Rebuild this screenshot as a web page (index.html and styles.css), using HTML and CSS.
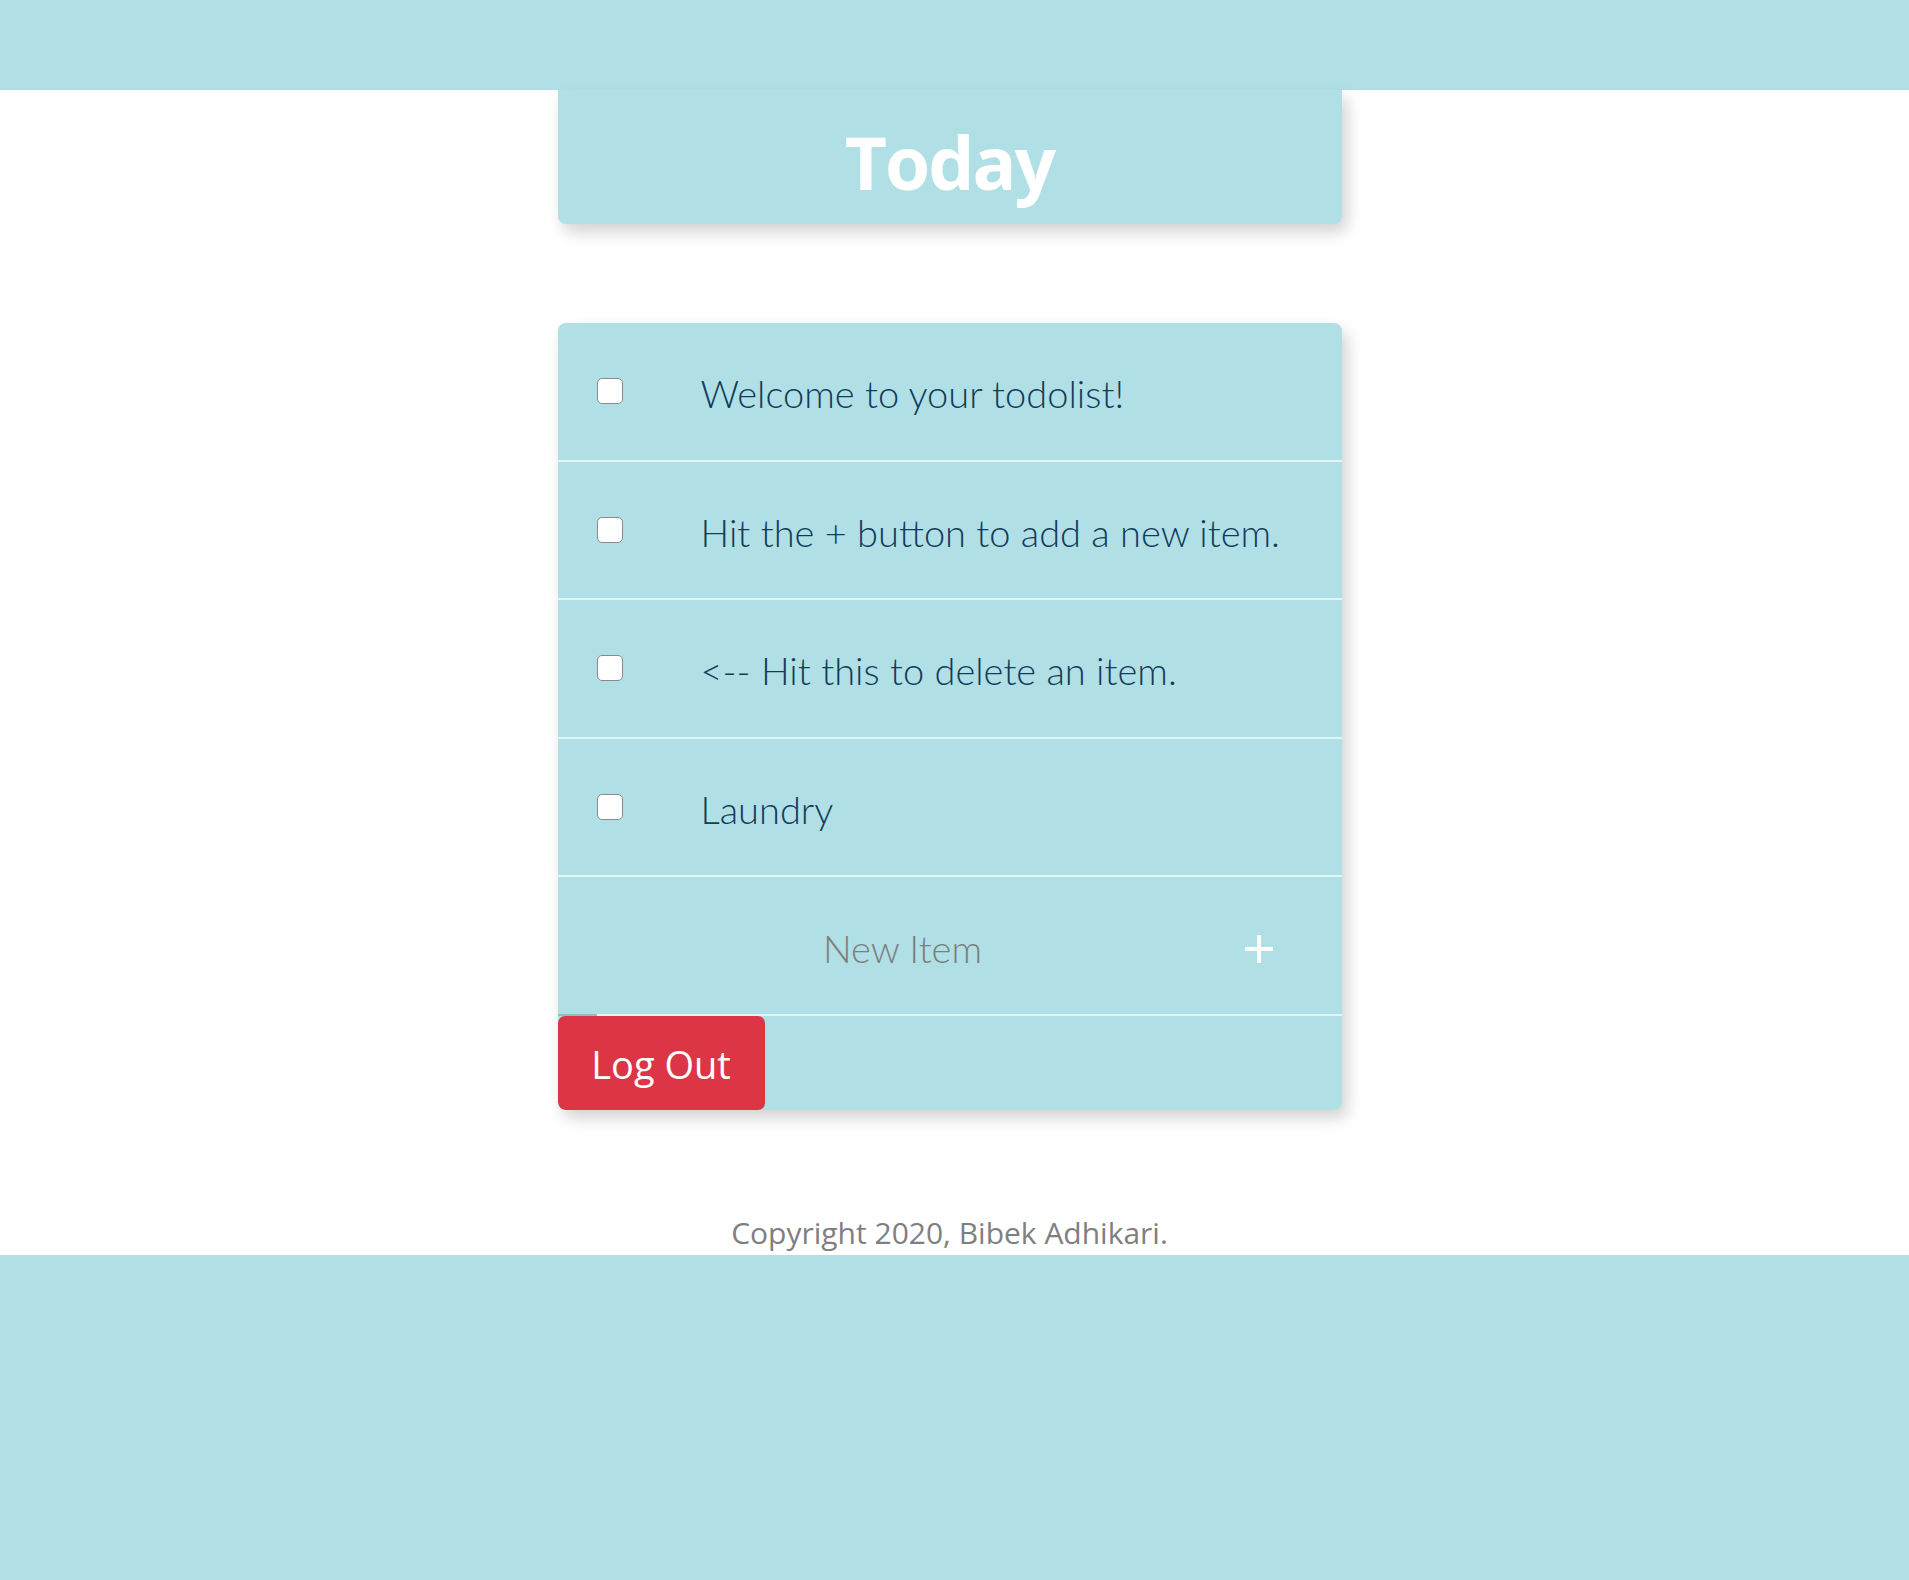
FILE: index.html
```html
<!DOCTYPE html>
<html lang="en">
<head>
<meta charset="utf-8">
<title>To-Do List</title>
<link rel="stylesheet" href="styles.css">
</head>
<body>
<div class="band band-top"></div>
<div class="wrap">
  <div class="heading box">
    <h1>Today</h1>
  </div>
  <div class="list box">
    <div class="item">
      <input type="checkbox" class="check">
      <p>Welcome to your todolist!</p>
    </div>
    <div class="item">
      <input type="checkbox" class="check">
      <p>Hit the + button to add a new item.</p>
    </div>
    <div class="item">
      <input type="checkbox" class="check">
      <p>&lt;-- Hit this to delete an item.</p>
    </div>
    <div class="item">
      <input type="checkbox" class="check">
      <p>Laundry</p>
    </div>
    <form class="item new-item">
      <input type="text" class="new-input" placeholder="New Item" autocomplete="off">
      <button type="button" class="add-btn" aria-label="Add">
        <svg width="28" height="28" viewBox="0 0 28 28"><path d="M14 0V28M0 14H28" stroke="#fff" stroke-width="4" fill="none"/></svg>
      </button>
    </form>
    <div class="logout-row">
      <button type="button" class="logout">Log Out</button>
    </div>
  </div>
  <footer class="footer">
    <p>Copyright 2020, Bibek Adhikari.</p>
  </footer>
</div>
<div class="band band-bottom"></div>
</body>
</html>
```

FILE: styles.css
```css
html, body {
  margin: 0;
  padding: 0;
  background: #ffffff;
}

body {
  font-family: "Open Sans", "Noto Sans", sans-serif;
}

.band {
  background: #b0e0e6;
}

.band-top {
  height: 90px;
}

.band-bottom {
  height: 326px;
}

.wrap {
  width: 784px;
  margin: 0 auto;
  position: relative;
  left: -5px;
}

.box {
  background: #b0e0e6;
  border-radius: 8px;
  box-shadow: 5px 8px 16px rgba(0, 0, 0, 0.18);
}

.heading {
  height: 134px;
  border-radius: 0 0 8px 8px;
  display: flex;
  align-items: center;
  justify-content: center;
}

.heading h1 {
  margin: 0;
  padding-top: 8px;
  color: #ffffff;
  font-family: "Open Sans", sans-serif;
  font-weight: 700;
  font-size: 73px;
  line-height: 1;
  letter-spacing: -2px;
}

.list {
  margin-top: 99px;
  overflow: hidden;
}

.item {
  height: 136.5px;
  border-bottom: 2px solid #e4f3f5;
  display: flex;
  align-items: center;
  padding-left: 39px;
  margin: 0;
}

.item p {
  margin: 0 0 0 78px;
  padding-top: 4px;
  font-family: "Lato", "Open Sans", sans-serif;
  font-weight: 300;
  font-size: 38px;
  color: #143c5a;
}

.check {
  appearance: none;
  -webkit-appearance: none;
  width: 26px;
  height: 26px;
  margin: 0;
  background: #ffffff;
  border: 1.5px solid #8a8a8a;
  border-radius: 5px;
  box-sizing: border-box;
  flex: none;
}

.new-item {
  padding-left: 39px;
  border-bottom: none;
  padding-bottom: 2px;
  background-image: linear-gradient(to right, #93bcc1 39px, #e4f3f5 39px);
  background-size: 100% 2px;
  background-position: left bottom;
  background-repeat: no-repeat;
}

.new-input {
  width: 612px;
  border: none;
  background: transparent;
  outline: none;
  text-align: center;
  font-family: "Lato", "Open Sans", sans-serif;
  font-weight: 300;
  font-size: 38px;
  color: #143c5a;
  padding: 0;
  margin: 5px 0 0 0;
}

.new-input::placeholder {
  color: #7b7f80;
}

.add-btn {
  width: 100px;
  height: 60px;
  border: none;
  background: transparent;
  padding: 0;
  margin-top: 7px;
  display: flex;
  align-items: center;
  justify-content: center;
}

.logout-row {
  height: 94px;
}

.logout {
  height: 94px;
  width: 207px;
  border: none;
  border-radius: 7px;
  background: #dc3545;
  color: #ffffff;
  font-family: "Open Sans", sans-serif;
  font-size: 38px;
  padding: 3px 0 0 0;
}

.footer {
  height: 145px;
  display: flex;
  align-items: flex-end;
  justify-content: center;
}

.footer p {
  margin: 0 0 3px 0;
  font-family: "Open Sans", sans-serif;
  font-size: 30px;
  color: #7f7f7f;
  line-height: 38px;
}
```
